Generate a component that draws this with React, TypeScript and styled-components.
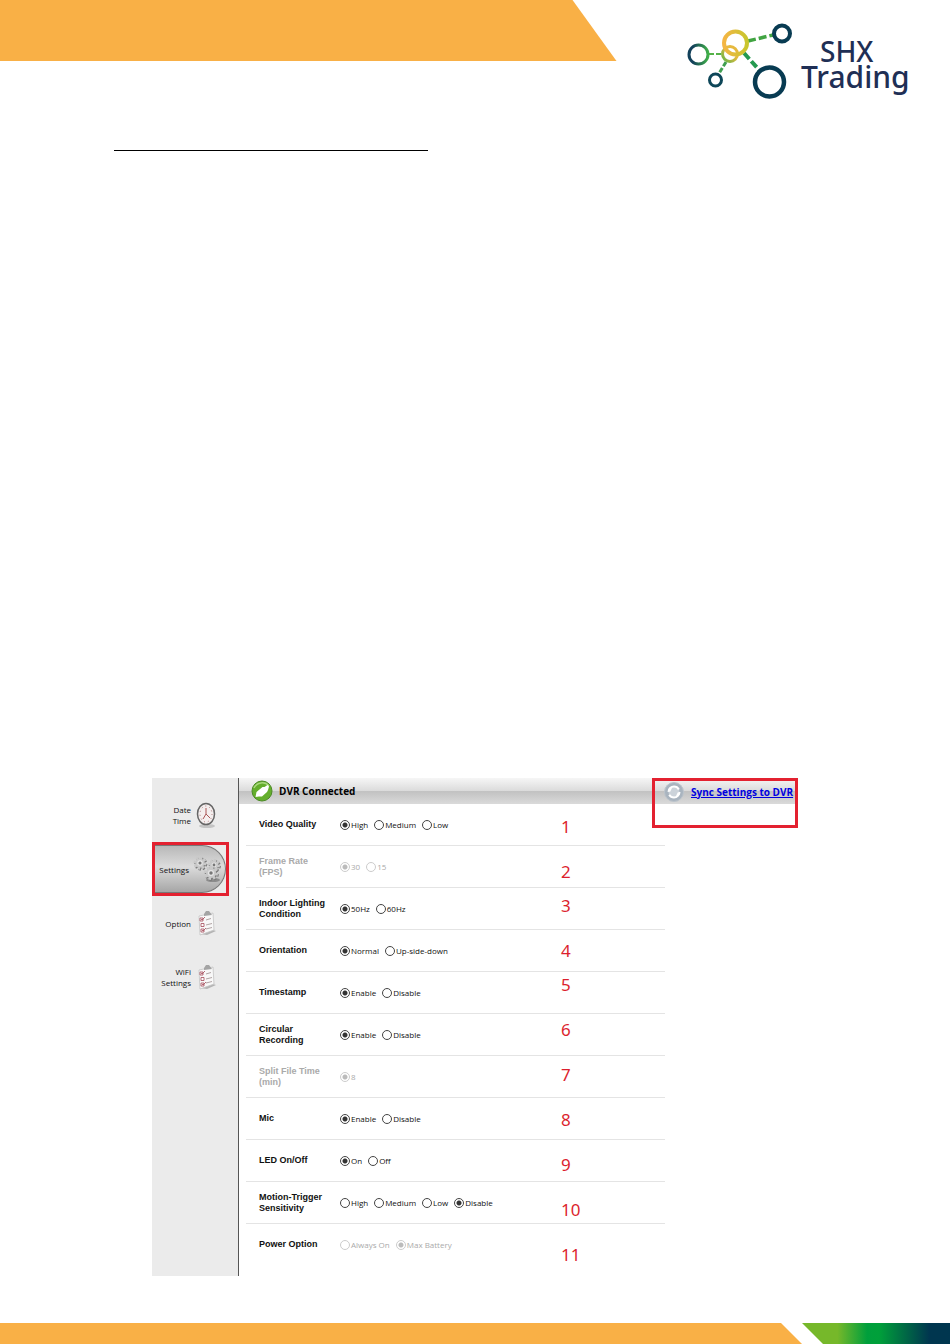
import React from "react";
import styled, { createGlobalStyle } from "styled-components";

const GlobalStyle = createGlobalStyle`
  *, *::before, *::after { box-sizing: border-box; }
  body { margin: 0; background: #fff; color: #111; font-family: "Open Sans", "Noto Sans", sans-serif; }
`;

const Page = styled.div`
  display: flex;
  flex-direction: column;
  min-height: 100vh;
`;

const Header = styled.header`
  display: flex;
  justify-content: space-between;
  align-items: flex-start;
`;

const Banner = styled.div`
  width: 65%;
  height: 61px;
  background: #f9b046;
  clip-path: polygon(0 0, calc(100% - 45px) 0, calc(100% - 1px) 100%, 0 100%);
`;

const LogoSvg = styled.svg`
  display: block;
  flex: none;
  width: 230px;
  height: 90px;
  margin: 16px 36px 0 0;
`;

const LogoText = styled.text<{ $large?: boolean }>`
  font-family: "Noto Sans", sans-serif;
  font-size: ${(p) => (p.$large ? 30 : 28)}px;
  font-weight: 500;
  fill: #1f2f55;
`;

const HeadingRule = styled.hr`
  width: 33%;
  height: 1px;
  margin: 44px 0 0 12%;
  border: 0;
  background: #000;
`;

const Body = styled.main`
  display: flex;
  flex: 1;
  flex-direction: column;
  justify-content: flex-end;
  padding: 40px 0 47px;
`;

const Panel = styled.section`
  position: relative;
  display: flex;
  width: 68%;
  margin: 0 auto;
`;

const Sidebar = styled.nav`
  flex: none;
  width: 87px;
  padding-top: 10px;
  background: #ebebeb;
  border-right: 1px solid #555;
`;

const NavItem = styled.div<{ $marked?: boolean }>`
  width: 77px;
  height: 54px;
  border: 3px solid ${(p) => (p.$marked ? "#e32130" : "transparent")};
`;

const NavButton = styled.button<{ $active?: boolean }>`
  display: flex;
  align-items: center;
  justify-content: flex-end;
  gap: 4px;
  width: 100%;
  height: 100%;
  padding: 0 ${(p) => (p.$active ? 4 : 9)}px 0 0;
  border: ${(p) => (p.$active ? "1px solid #777" : "0")};
  border-left: 0;
  border-radius: 0 28px 28px 0;
  background: ${(p) => (p.$active ? "linear-gradient(#b8b8b8, #dcdcdc 45%, #a6a6a6)" : "none")};
  color: #111;
  font-family: "Open Sans", "Noto Sans", sans-serif;
  font-size: 8px;
  line-height: 11px;
  text-align: right;
`;

const NavIcon = styled.svg<{ $wide?: boolean }>`
  flex: none;
  width: ${(p) => (p.$wide ? 28 : 22)}px;
  height: 28px;
`;

const Content = styled.div`
  flex: 1;
  min-width: 0;
`;

const StatusBar = styled.div`
  display: flex;
  align-items: center;
  height: 26px;
  padding-left: 12px;
  background: linear-gradient(#f6f6f6, #dcdcdc 48%, #c2c2c2 52%, #dadada);
`;

const Status = styled.strong`
  display: flex;
  flex: 1;
  align-items: center;
  gap: 6px;
  color: #000;
  font-size: 10px;
  line-height: 14px;
`;

const RoundIcon = styled.svg`
  flex: none;
  width: 22px;
  height: 22px;
`;

const SyncBox = styled.div`
  position: absolute;
  top: 0;
  right: 0;
  width: 146px;
  height: 50px;
  border: 3px solid #e32130;
`;

const SyncLink = styled.a`
  display: flex;
  align-items: center;
  gap: 6px;
  height: 21px;
  padding-left: 8px;
  color: #0000e0;
  font-size: 10px;
  font-weight: 700;
  line-height: 14px;
  white-space: nowrap;
`;

const Rows = styled.div`
  width: 75%;
  margin-left: 7px;
  padding-bottom: 10px;
`;

const Row = styled.div<{ $disabled?: boolean }>`
  display: flex;
  align-items: center;
  height: 42px;
  padding-left: 13px;
  border-bottom: 1px solid #e4e4e4;
  color: ${(p) => (p.$disabled ? "#aaa" : "#111")};

  &:last-child { border-bottom-color: transparent; }
`;

const RowLabel = styled.div`
  flex: none;
  width: 81px;
  font-family: "Liberation Sans", Arial, sans-serif;
  font-size: 9px;
  font-weight: 700;
  line-height: 11px;
  white-space: pre-line;
`;

const Options = styled.div<{ $muted?: boolean }>`
  display: flex;
  gap: 6px;
  color: ${(p) => (p.$muted ? "#aaa" : "inherit")};
`;

const Option = styled.label`
  display: flex;
  align-items: center;
  gap: 1px;
  font-size: 8px;
  line-height: 12px;
  white-space: nowrap;
`;

const Radio = styled.input`
  appearance: none;
  width: 10px;
  height: 10px;
  margin: 0;
  border: 1px solid #444;
  border-radius: 50%;
  background: #fff;

  &:checked { background: radial-gradient(circle, #333 0 2px, #fff 3px); }
  &:disabled { border-color: #ccc; }
  &:disabled:checked { background: radial-gradient(circle, #bbb 0 2px, #fff 3px); }
`;

const Notes = styled.ol`
  position: absolute;
  top: 37px;
  left: 409px;
  margin: 0;
  padding: 0;
  list-style: none;
  color: #dc1f2e;
  font-family: "Noto Sans", sans-serif;
  font-size: 17px;
  line-height: 24px;
`;

const Note = styled.li<{ $tight?: boolean }>`
  height: ${(p) => (p.$tight ? 34 : 45)}px;
`;

const Footer = styled.footer`
  display: flex;
  height: 21px;
`;

const FooterOrange = styled.div`
  flex: 1;
  background: #f9b046;
  clip-path: polygon(0 0, calc(100% - 21px) 0, 100% 100%, 0 100%);
`;

const FooterGreen = styled.div`
  width: 148px;
  background: linear-gradient(90deg, #76b82a 24%, #009f3c 44%, #00a03a 52%, #00364f 86%);
  clip-path: polygon(0 0, 100% 0, 100% 100%, 21px 100%);
`;

function Logo() {
  return (
    <LogoSvg viewBox="684 16 230 90" role="img" aria-label="SHX Trading">
      <defs>
        <linearGradient id="leftRing">
          <stop offset="0.2" stopColor="#12405a" />
          <stop offset="1" stopColor="#3fae49" />
        </linearGradient>
        <linearGradient id="sunRing">
          <stop offset="0" stopColor="#f4b544" />
          <stop offset="1" stopColor="#c8c62e" />
        </linearGradient>
        <linearGradient id="midRing" x1="0" y1="1" x2="1" y2="0">
          <stop offset="0" stopColor="#5fb446" />
          <stop offset="0.6" stopColor="#e6b93e" />
        </linearGradient>
      </defs>
      <g fill="none" strokeWidth="3">
        <path d="M709 54h12" stroke="#55b248" strokeWidth="2" strokeDasharray="5 2" />
        <path d="M726 62l-8 13" stroke="#3f9f50" strokeWidth="3" strokeDasharray="5 2" />
        <path d="M748 41l25-6" stroke="#41a442" strokeWidth="3.5" strokeDasharray="8 3" />
        <path d="M744 53l16 18" stroke="#249a50" strokeWidth="4" strokeDasharray="8 3" />
        <circle cx="698.5" cy="54.5" r="9.5" stroke="url(#leftRing)" />
        <circle cx="715.5" cy="80" r="6" stroke="#0d4658" />
        <circle cx="730" cy="54" r="7.5" stroke="url(#midRing)" />
        <circle cx="735.5" cy="43" r="11.5" stroke="url(#sunRing)" strokeWidth="4" />
        <circle cx="782" cy="33.5" r="8" stroke="#083b52" strokeWidth="4" />
        <circle cx="769.5" cy="82" r="14.5" stroke="#083b52" strokeWidth="4.5" />
      </g>
      <LogoText x="820" y="62">SHX</LogoText>
      <LogoText $large x="801" y="88">Trading</LogoText>
    </LogoSvg>
  );
}

function ClockIcon() {
  return (
    <NavIcon viewBox="0 0 22 28" aria-hidden="true">
      <ellipse cx="12" cy="25" rx="8" ry="2" fill="#c4c4c4" />
      <ellipse cx="11" cy="13" rx="8.5" ry="10.5" fill="#f4eeee" stroke="#666" strokeWidth="1.5" />
      <ellipse cx="11" cy="13" rx="6" ry="8" fill="none" stroke="#a77" strokeWidth="1" strokeDasharray="1 3" />
      <path d="M11 7v6l-3 5M11 13l4 4" fill="none" stroke="#a55" strokeWidth="1" />
    </NavIcon>
  );
}

function Gear({ x, y, r }: { x: number; y: number; r: number }) {
  const teeth = [0, 45, 90, 135].map((angle) => (
    <rect key={angle} x={-1.3} y={-r - 2} width={2.6} height={2 * r + 4} transform={`rotate(${angle + 12})`} />
  ));
  return (
    <g transform={`translate(${x} ${y})`}>
      <g fill="#7a7a7a" transform="translate(0.8 1)">
        {teeth}
        <circle r={r} />
      </g>
      <g fill="#c9c9c9">
        {teeth}
        <circle r={r} />
      </g>
      <circle r={r * 0.6} fill="#e6e6e6" />
      <circle r={r * 0.35} fill="#777" />
    </g>
  );
}

function GearsIcon() {
  return (
    <NavIcon $wide viewBox="0 0 28 28" aria-hidden="true">
      <ellipse cx="20" cy="25" rx="7" ry="2" fill="#8c8c8c" />
      <Gear x={7} y={8} r={4.5} />
      <Gear x={21} y={10} r={4} />
      <Gear x={18} y={18} r={5} />
    </NavIcon>
  );
}

function ChecklistIcon() {
  return (
    <NavIcon viewBox="0 0 22 28" aria-hidden="true">
      <path d="M5 25l13-4 3 1-9 4z" fill="#b4b4b4" />
      <path d="M4 7l14-3 1 17-14 5z" fill="#f8f8f8" stroke="#c4c4c4" strokeWidth="0.8" />
      <path d="M9 5l2-3 3 0 3 4-8 1z" fill="#a4a4a4" />
      <path d="M11 11l5-1.500M11 16l6-1.500M11 20l6-1.500" stroke="#b0a4a4" strokeWidth="1" />
      <g fill="#fff" stroke="#a34a58" strokeWidth="0.8">
        <path d="M5 9h3v3h-3zM6 14.500h3v3h-3zM6 20h3v3h-3z" />
        <path d="M6 10l1 1 3-3M7 21l1 1 3-3" fill="none" />
      </g>
    </NavIcon>
  );
}

const navItems = [
  { text: ["Date", "Time"], icon: <ClockIcon /> },
  { text: ["Settings"], icon: <GearsIcon />, active: true },
  { text: ["Option"], icon: <ChecklistIcon /> },
  { text: ["WiFi", "Settings"], icon: <ChecklistIcon /> },
];

const settings = [
  { label: "Video Quality", options: ["High", "Medium", "Low"], value: "High" },
  { label: "Frame Rate\n(FPS)", options: ["30", "15"], value: "30", disabled: true },
  { label: "Indoor Lighting\nCondition", options: ["50Hz", "60Hz"], value: "50Hz" },
  { label: "Orientation", options: ["Normal", "Up-side-down"], value: "Normal" },
  { label: "Timestamp", options: ["Enable", "Disable"], value: "Enable" },
  { label: "Circular\nRecording", options: ["Enable", "Disable"], value: "Enable" },
  { label: "Split File Time\n(min)", options: ["8"], value: "8", disabled: true },
  { label: "Mic", options: ["Enable", "Disable"], value: "Enable" },
  { label: "LED On/Off", options: ["On", "Off"], value: "On" },
  { label: "Motion-Trigger\nSensitivity", options: ["High", "Medium", "Low", "Disable"], value: "Disable" },
  { label: "Power Option", options: ["Always On", "Max Battery"], value: "Max Battery", mutedOptions: true },
];

export default function App() {
  return (
    <Page>
      <GlobalStyle />
      <Header>
        <Banner />
        <Logo />
      </Header>
      <HeadingRule />
      <Body>
        <Panel>
          <Sidebar>
            {navItems.map((item) => (
              <NavItem key={item.text.join(" ")} $marked={item.active}>
                <NavButton type="button" $active={item.active}>
                  <span>
                    {item.text.map((line, i) => (
                      <React.Fragment key={line}>
                        {i > 0 && <br />}
                        {line}
                      </React.Fragment>
                    ))}
                  </span>
                  {item.icon}
                </NavButton>
              </NavItem>
            ))}
          </Sidebar>
          <Content>
            <StatusBar>
              <Status>
                <RoundIcon viewBox="0 0 22 22" aria-hidden="true">
                  <circle cx="11" cy="11" r="10" fill="#64ae2c" stroke="#4c8a25" />
                  <path d="M3 8a9 9 0 0 1 15-2" fill="none" stroke="#a9d77d" strokeWidth="1.5" />
                  <path d="M4.500 17l1-5 6-5 2 0 3-2 1.500 1.500-1 3.500-1 2-5 4.500-3 0z" fill="#fff" />
                </RoundIcon>
                DVR Connected
              </Status>
            </StatusBar>
            <Rows>
              {settings.map((row, index) => (
                <Row key={row.label} $disabled={row.disabled}>
                  <RowLabel id={`setting-${index}`}>{row.label}</RowLabel>
                  <Options role="radiogroup" aria-labelledby={`setting-${index}`} $muted={row.mutedOptions}>
                    {row.options.map((option) => (
                      <Option key={option}>
                        <Radio
                          type="radio"
                          name={`setting-${index}`}
                          defaultChecked={option === row.value}
                          disabled={row.disabled || row.mutedOptions}
                        />
                        {option}
                      </Option>
                    ))}
                  </Options>
                </Row>
              ))}
            </Rows>
          </Content>
          <SyncBox>
            <SyncLink href="#sync">
              <RoundIcon viewBox="0 0 22 22" aria-hidden="true">
                <circle cx="11" cy="11" r="9.5" fill="#a9b4bf" stroke="#bcc4cc" />
                <circle cx="11" cy="11" r="5.5" fill="#ccd3da" stroke="#fff" strokeWidth="2" strokeDasharray="14 3" />
                <path d="M5 8l4-1-2 4zM17 14l-4 1 2-4z" fill="#fff" />
              </RoundIcon>
              Sync Settings to DVR
            </SyncLink>
          </SyncBox>
          <Notes>
            {settings.map((row, index) => (
              <Note key={row.label} $tight={index === 1 || index === 3}>
                {index + 1}
              </Note>
            ))}
          </Notes>
        </Panel>
      </Body>
      <Footer>
        <FooterOrange />
        <FooterGreen />
      </Footer>
    </Page>
  );
}
